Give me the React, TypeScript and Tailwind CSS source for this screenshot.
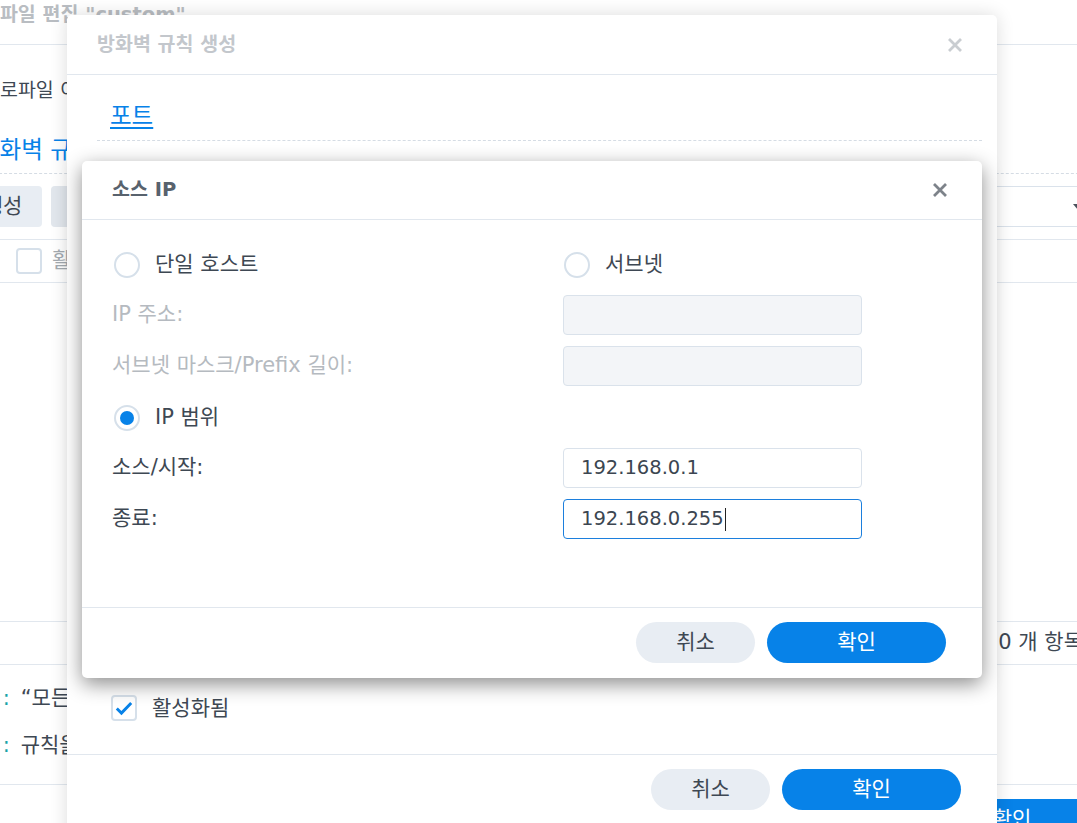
import type { ReactNode } from 'react';

function CloseIcon({ className }: { className: string }) {
  return (
    <svg viewBox="0 0 16 16" className={className} fill="none" stroke="currentColor" strokeWidth={2.8}>
      <path d="M2 2l12 12M14 2L2 14" />
    </svg>
  );
}

function Radio({ checked }: { checked?: boolean }) {
  return (
    <span className="flex h-[26px] w-[26px] shrink-0 items-center justify-center rounded-full border-2 border-[#d6e0ea] bg-white">
      {checked && <span className="h-[14px] w-[14px] rounded-full bg-[#0782e8]" />}
    </span>
  );
}

function Checkbox({ checked }: { checked?: boolean }) {
  return (
    <span className="flex h-[26px] w-[26px] shrink-0 items-center justify-center rounded-[4px] border-2 border-[#d6e0ea] bg-white">
      {checked && (
        <svg viewBox="0 0 26 26" className="h-[26px] w-[26px]" fill="none" stroke="#0782e8" strokeWidth={3.4}>
          <path d="M4.5 13.5l5.5 5.5 11.5-12" />
        </svg>
      )}
    </span>
  );
}

function Field({ value, disabled, focused }: { value?: string; disabled?: boolean; focused?: boolean }) {
  const tone = disabled
    ? 'bg-[#f3f5f8] border-[#dae2eb]'
    : focused
      ? 'bg-white border-[#1c7fdd]'
      : 'bg-white border-[#dae2eb]';
  return (
    <div className={`flex h-[40px] w-[299px] items-center rounded-[4px] border pl-[17px] text-[19.5px] text-[#3c4651] ${tone}`}>
      {value}
      {focused && <span className="ml-[1px] inline-block h-[23px] w-px bg-[#222]" />}
    </div>
  );
}

function Row({ left, right, className }: { left: ReactNode; right?: ReactNode; className: string }) {
  return (
    <div className={`grid h-[40px] grid-cols-[451px_299px] items-center ${className}`}>
      <div className="flex items-center">{left}</div>
      <div className="flex items-center">{right}</div>
    </div>
  );
}

function PillButton({ primary, wide, children }: { primary?: boolean; wide?: boolean; children: ReactNode }) {
  return (
    <button
      className={`flex h-[41px] items-center justify-center rounded-full text-[21px] ${wide ? 'w-[179px]' : 'w-[119px]'} ${
        primary ? 'bg-[#0782e8] text-white' : 'bg-[#e8edf3] text-[#3e4853]'
      }`}
    >
      {children}
    </button>
  );
}

function Note({ label, children }: { label: string; children: ReactNode }) {
  return (
    <div className="mt-[19px] flex -ml-[3px] text-[21px] leading-[28px]">
      <span className="text-[#1aa3a9]">{label}</span>
      <span className="ml-[3px] text-[#1aa3a9]">:</span>
      <span className="ml-[11px]">{children}</span>
    </div>
  );
}

function BackgroundPage() {
  return (
    <div className="ml-[-36px] w-[1170px] text-[#3e4853]">
      <div className="h-[45px] border-b border-[#e1e7ee] pt-[3px]">
        <span className="text-[19.5px] font-bold leading-[24px] text-[#b9bdc2]">프로파일 편집 "custom"</span>
      </div>
      <div className="mt-[33px] pl-[18px] text-[19.5px] leading-[26px]">프로파일 이름:</div>
      <div className="mt-[31px] pl-[14px] text-[23.5px] leading-[30px] text-[#0782e8]">방화벽 규칙</div>
      <div className="h-[9px] border-b border-dashed border-[#d5dce4]" />
      <div className="mt-[12px] flex h-[41px]">
        <div className="flex w-[78px] items-center justify-center rounded-[4px] bg-[#e8edf3] text-[21px]">생성</div>
        <div className="ml-[9px] flex w-[110px] items-center justify-center rounded-[4px] bg-[#e2e7ed] text-[21px] text-[#9aa1a8]">편집</div>
        <div className="ml-auto mr-[37px] flex w-[300px] items-center justify-end border-y border-[#dae2eb] pr-[14px]">
          <svg viewBox="0 0 10 6" className="h-[6px] w-[10px]">
            <polygon points="0,0 10,0 5,6" fill="#4a525c" />
          </svg>
        </div>
      </div>
      <div className="mt-[12px] flex h-[44px] items-center border-y border-[#e1e7ee]">
        <span className="ml-[52px]">
          <Checkbox />
        </span>
        <span className="ml-[10px] text-[21px] text-[#a4aab0]">활성화됨</span>
      </div>
      <div className="h-[338px]" />
      <div className="flex h-[44px] items-center justify-end border-y border-[#e1e7ee] pr-[51px] text-[21px]">0 개 항목</div>
      <Note label="참고">“모든 인터페이스”에 적용된 규칙이 먼저 적용됩니다.</Note>
      <Note label="주의">규칙을 끌어서 순서를 바꿀 수 있습니다.</Note>
      <div className="mt-[25px] h-px bg-[#e1e7ee]" />
      <div className="mt-[14px] flex justify-end pr-[32px]">
        <div className="flex h-[41px] w-[180px] items-center justify-center rounded-full bg-[#0782e8] text-[21px] text-white">확인</div>
      </div>
    </div>
  );
}

export default function App() {
  return (
    <div className="relative h-[823px] w-[1077px] overflow-hidden bg-white font-[family-name:'DejaVu_Sans','Noto_Sans_CJK_KR',sans-serif]">
      <BackgroundPage />

      {/* rule dialog */}
      <div className="absolute left-[67px] top-[15px] h-[830px] w-[930px] rounded-t-[5px] bg-white shadow-[0_0_18px_rgba(0,0,0,0.14)]">
        <div className="flex h-[60px] items-center justify-between border-b border-[#e1e7ee] pl-[30px] pr-[34px]">
          <span className="text-[19.5px] font-bold text-[#c3c7cc]">방화벽 규칙 생성</span>
          <CloseIcon className="h-[16px] w-[16px] text-[#c9cdd1]" />
        </div>
        <div className="flex h-[680px] flex-col border-b border-[#e1e7ee] pl-[30px] pr-[15px]">
          <div className="h-[66px] border-b border-dashed border-[#d5dce4] pt-[26px]">
            <span className="ml-[13px] text-[23.5px] leading-[30px] text-[#0782e8] underline underline-offset-[3px]">포트</span>
          </div>
          <div className="flex-1" />
          <div className="ml-[14px] flex items-center gap-[15px] pb-[30px]">
            <Checkbox checked />
            <span className="text-[21px] text-[#3e4853]">활성화됨</span>
          </div>
        </div>
        <div className="flex justify-end gap-[12px] pr-[36px] pt-[14px]">
          <PillButton>취소</PillButton>
          <PillButton primary wide>
            확인
          </PillButton>
        </div>
      </div>

      {/* source IP dialog */}
      <div className="absolute left-[82px] top-[161px] h-[517px] w-[900px] rounded-[5px] bg-white shadow-[0_6px_20px_rgba(0,0,0,0.45)]">
        <div className="flex h-[59px] items-center justify-between border-b border-[#e1e7ee] pl-[30px] pr-[34px]">
          <span className="text-[19.5px] font-bold text-[#58626d]">소스 IP</span>
          <CloseIcon className="h-[16px] w-[16px] text-[#7d838a]" />
        </div>
        <div className="h-[388px] border-b border-[#e1e7ee] pl-[30px] pt-[25px] text-[21px]">
          <Row
            className=""
            left={
              <label className="ml-[2px] flex items-center gap-[15px] text-[#3e4853]">
                <Radio />
                단일 호스트
              </label>
            }
            right={
              <label className="ml-[1px] flex items-center gap-[15px] text-[#3e4853]">
                <Radio />
                서브넷
              </label>
            }
          />
          <Row className="mt-[10px]" left={<span className="text-[#b5bac0]">IP 주소:</span>} right={<Field disabled />} />
          <Row
            className="mt-[11px]"
            left={<span className="text-[#b5bac0]">서브넷 마스크/Prefix 길이:</span>}
            right={<Field disabled />}
          />
          <Row
            className="mt-[12px]"
            left={
              <label className="ml-[2px] flex items-center gap-[15px] text-[#3e4853]">
                <Radio checked />
                IP 범위
              </label>
            }
          />
          <Row className="mt-[10px]" left={<span className="text-[#3e4853]">소스/시작:</span>} right={<Field value="192.168.0.1" />} />
          <Row className="mt-[11px]" left={<span className="text-[#3e4853]">종료:</span>} right={<Field value="192.168.0.255" focused />} />
        </div>
        <div className="flex justify-end gap-[12px] pr-[36px] pt-[14px]">
          <PillButton>취소</PillButton>
          <PillButton primary wide>
            확인
          </PillButton>
        </div>
      </div>
    </div>
  );
}
